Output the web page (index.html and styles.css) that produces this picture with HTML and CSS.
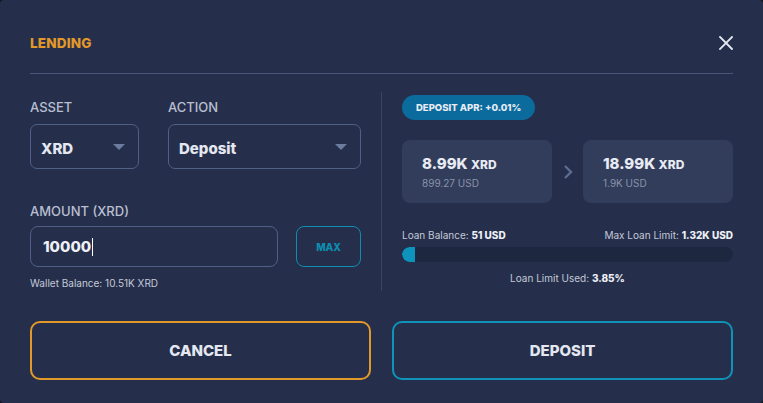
FILE: index.html
```html
<!DOCTYPE html>
<html lang="en">
<head>
<meta charset="utf-8">
<title>Lending</title>
<link rel="stylesheet" href="styles.css">
</head>
<body>
<div class="modal">
  <div class="header">
    <div class="title">LENDING</div>
    <button class="close" aria-label="Close">
      <svg width="14" height="14" viewBox="0 0 14 14"><path d="M1 1L13 13M13 1L1 13" stroke="#e6e9f2" stroke-width="1.8" stroke-linecap="square"/></svg>
    </button>
  </div>
  <div class="divider"></div>
  <div class="body">
    <div class="left">
      <div class="row-selects">
        <div class="field asset">
          <div class="label">ASSET</div>
          <div class="select"><span>XRD</span><span class="caret"></span></div>
        </div>
        <div class="field action">
          <div class="label">ACTION</div>
          <div class="select"><span>Deposit</span><span class="caret"></span></div>
        </div>
      </div>
      <div class="amount">
        <div class="label">AMOUNT (XRD)</div>
        <div class="amount-row">
          <div class="input"><span>10000</span><span class="cursor"></span></div>
          <button class="max">MAX</button>
        </div>
        <div class="wallet">Wallet Balance: 10.51K XRD</div>
      </div>
    </div>
    <div class="right">
      <div class="badge">DEPOSIT APR: +0.01%</div>
      <div class="cards">
        <div class="card">
          <div class="big">8.99K <small>XRD</small></div>
          <div class="sub">899.27 USD</div>
        </div>
        <svg class="chev" width="10" height="16" viewBox="0 0 10 16"><path d="M2 2L8 8L2 14" fill="none" stroke="#5d6b8f" stroke-width="2.4"/></svg>
        <div class="card">
          <div class="big">18.99K <small>XRD</small></div>
          <div class="sub">1.9K USD</div>
        </div>
      </div>
      <div class="loan-row">
        <span>Loan Balance: <b>51 USD</b></span>
        <span>Max Loan Limit: <b>1.32K USD</b></span>
      </div>
      <div class="bar"><div class="fill" style="width:3.85%"></div></div>
      <div class="used">Loan Limit Used: <b>3.85%</b></div>
    </div>
  </div>
  <div class="buttons">
    <button class="btn cancel">CANCEL</button>
    <button class="btn deposit">DEPOSIT</button>
  </div>
</div>
</body>
</html>
```
FILE: styles.css
```css
* { box-sizing: border-box; }
html, body { margin: 0; padding: 0; background: #10131c; }
body { font-family: Inter, "Noto Sans", sans-serif; color: #e4e7f0; }
.modal {
  width: 763px; height: 403px;
  background: #252f4b;
  border-radius: 4px;
  padding: 30px 30px 0;
}
.header { display: flex; justify-content: space-between; align-items: center; height: 26px; }
.title { color: #e3982a; font-weight: 800; font-size: 13.5px; letter-spacing: 0.2px; }
.close { background: none; border: 0; padding: 0; width: 14px; height: 14px; display: flex; }
.divider { height: 1px; background: #4a5577; margin-top: 17px; }
.body { display: flex; margin-top: 18px; }
.left { width: 331px; padding-top: 7px; }
.right { width: 352px; margin-left: 20px; border-left: 1px solid #3a4564; padding: 3px 0 0 20px; height: 199px; }
.label { color: #b9bfd1; font-size: 13px; line-height: 16px; font-weight: 500; }
.row-selects { display: flex; gap: 29px; }
.asset { width: 109px; }
.action { width: 193px; }
.select {
  margin-top: 9px; height: 45px; border: 1px solid #4f5f85; border-radius: 7px;
  display: flex; align-items: center; justify-content: space-between;
  padding: 3px 13px 0 10px; font-weight: 800; font-size: 15px; color: #e4e7f0;
}
.caret { width: 0; height: 0; border-left: 6px solid transparent; border-right: 6px solid transparent; border-top: 6px solid #6d7b9e; margin-top: -2px; }
.amount { margin-top: 34px; }
.amount-row { display: flex; justify-content: space-between; margin-top: 7px; }
.input {
  width: 248px; height: 41px; border: 1px solid #4f5f85; border-radius: 8px;
  display: flex; align-items: center; padding-left: 12px; font-weight: 800; font-size: 15px; color: #eef0f6;
}
.cursor { width: 1px; height: 18px; background: #fff; margin-left: 1px; }
.max {
  width: 65px; height: 41px; background: none; border: 1px solid #0f8db1; border-radius: 8px;
  color: #0f8db1; font-family: inherit; font-weight: 800; font-size: 10px;
}
.wallet { margin-top: 10px; font-size: 10px; color: #c4c9d8; }
.badge {
  display: inline-block; background: #0a6b9c; color: #e8ecf5; font-weight: 800; font-size: 9.5px;
  height: 25px; line-height: 25px; padding: 0 14px; border-radius: 13px;
}
.cards { display: flex; align-items: center; margin-top: 20px; justify-content: space-between; }
.card { width: 150px; height: 63px; background: #313d5a; border-radius: 8px; padding: 15px 0 0 20px; }
.chev { display: block; }
.big { font-weight: 800; font-size: 15px; line-height: 18px; color: #e8ebf3; }
.big small { font-size: 12px; font-weight: 800; }
.sub { font-size: 10px; color: #8a93ab; margin-top: 3px; }
.loan-row { display: flex; justify-content: space-between; font-size: 10px; color: #c4c9d8; margin-top: 26px; }
.loan-row b, .used b { color: #eef0f6; font-weight: 800; }
.bar { height: 15px; background: #1d2740; border-radius: 8px; margin-top: 6px; overflow: hidden; }
.fill { height: 100%; background: #0e93bd; border-radius: 8px 0 0 8px; min-width: 12px; }
.used { text-align: center; font-size: 10px; color: #c4c9d8; margin-top: 10px; }
.buttons { display: flex; gap: 21px; margin-top: 30px; }
.btn {
  flex: 1; height: 59px; background: none; border-radius: 10px; border: 2px solid;
  font-family: inherit; font-weight: 800; font-size: 15px; color: #e4e7f0;
}
.cancel { border-color: #e3982a; }
.deposit { border-color: #0f93b8; }
```
